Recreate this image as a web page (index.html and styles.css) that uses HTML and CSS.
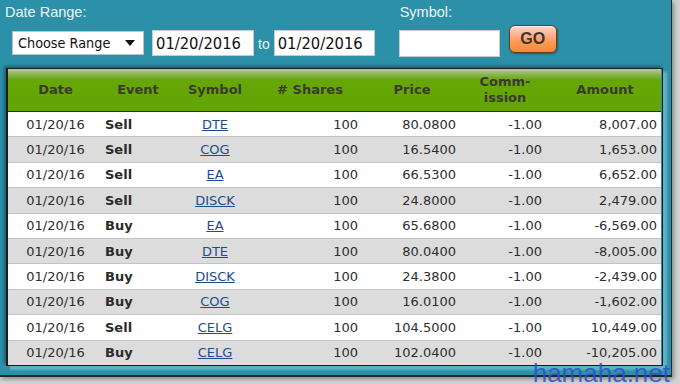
FILE: index.html
```html
<!DOCTYPE html>
<html>
<head>
<meta charset="utf-8">
<link rel="stylesheet" href="styles.css">
</head>
<body>
<div class="frame">
  <div class="toolbar">
    <div class="group group-date">
      <div class="label">Date Range:</div>
      <div class="controls">
        <div class="select"><span>Choose Range</span><svg class="caret" width="10" height="6" viewBox="0 0 10 6"><path d="M0 0H10L5 6Z" fill="#111"/></svg></div>
        <input class="date-input first" type="text" value="01/20/2016">
        <span class="to">to</span>
        <input class="date-input second" type="text" value="01/20/2016">
      </div>
    </div>
    <div class="group group-symbol">
      <div class="label label-symbol">Symbol:</div>
      <div class="controls">
        <input class="sym-input" type="text" value="">
        <button class="go">GO</button>
      </div>
    </div>
  </div>
  <div class="grid-wrap">
    <table class="grid">
      <colgroup>
        <col class="c-date"><col class="c-event"><col class="c-symbol"><col class="c-shares"><col class="c-price"><col class="c-comm"><col class="c-amount">
      </colgroup>
      <thead>
        <tr>
          <th>Date</th><th>Event</th><th>Symbol</th><th># Shares</th><th>Price</th><th>Comm-<br>ission</th><th>Amount</th>
        </tr>
      </thead>
      <tbody>
        <tr><td class="d">01/20/16</td><td class="ev">Sell</td><td class="sym"><a href="#">DTE</a></td><td class="sh">100</td><td class="pr">80.0800</td><td class="cm">-1.00</td><td class="am">8,007.00</td></tr>
        <tr class="alt"><td class="d">01/20/16</td><td class="ev">Sell</td><td class="sym"><a href="#">COG</a></td><td class="sh">100</td><td class="pr">16.5400</td><td class="cm">-1.00</td><td class="am">1,653.00</td></tr>
        <tr><td class="d">01/20/16</td><td class="ev">Sell</td><td class="sym"><a href="#">EA</a></td><td class="sh">100</td><td class="pr">66.5300</td><td class="cm">-1.00</td><td class="am">6,652.00</td></tr>
        <tr class="alt"><td class="d">01/20/16</td><td class="ev">Sell</td><td class="sym"><a href="#">DISCK</a></td><td class="sh">100</td><td class="pr">24.8000</td><td class="cm">-1.00</td><td class="am">2,479.00</td></tr>
        <tr><td class="d">01/20/16</td><td class="ev">Buy</td><td class="sym"><a href="#">EA</a></td><td class="sh">100</td><td class="pr">65.6800</td><td class="cm">-1.00</td><td class="am">-6,569.00</td></tr>
        <tr class="alt"><td class="d">01/20/16</td><td class="ev">Buy</td><td class="sym"><a href="#">DTE</a></td><td class="sh">100</td><td class="pr">80.0400</td><td class="cm">-1.00</td><td class="am">-8,005.00</td></tr>
        <tr><td class="d">01/20/16</td><td class="ev">Buy</td><td class="sym"><a href="#">DISCK</a></td><td class="sh">100</td><td class="pr">24.3800</td><td class="cm">-1.00</td><td class="am">-2,439.00</td></tr>
        <tr class="alt"><td class="d">01/20/16</td><td class="ev">Buy</td><td class="sym"><a href="#">COG</a></td><td class="sh">100</td><td class="pr">16.0100</td><td class="cm">-1.00</td><td class="am">-1,602.00</td></tr>
        <tr><td class="d">01/20/16</td><td class="ev">Sell</td><td class="sym"><a href="#">CELG</a></td><td class="sh">100</td><td class="pr">104.5000</td><td class="cm">-1.00</td><td class="am">10,449.00</td></tr>
        <tr class="alt"><td class="d">01/20/16</td><td class="ev">Buy</td><td class="sym"><a href="#">CELG</a></td><td class="sh">100</td><td class="pr">102.0400</td><td class="cm">-1.00</td><td class="am">-10,205.00</td></tr>
      </tbody>
    </table>
  </div>
</div>
<div class="watermark">hamaha.net</div>
</body>
</html>
```
FILE: styles.css
```css
html, body {
  margin: 0;
  padding: 0;
}
body {
  background: #d2d2d2;
  font-family: "DejaVu Sans", sans-serif;
  width: 680px;
  height: 384px;
  overflow: hidden;
  position: relative;
}
.frame {
  width: 671px;
  height: 375px;
  background: #2b90a8;
  border-right: 1px solid #1b2a30;
  border-bottom: 2px solid #1b2a30;
  box-shadow: 2px 2px 4px rgba(0,0,0,0.35);
  overflow: hidden;
}
.toolbar {
  display: flex;
  padding-top: 4px;
  height: 52px;
}
.group-date {
  margin-left: 5px;
}
.group-symbol {
  margin-left: 24px;
}
.label {
  font-family: "Liberation Sans", Arial, sans-serif;
  font-size: 14.5px;
  line-height: 16px;
  color: #eef4f6;
  height: 16px;
}
.label-symbol {
  margin-left: 1px;
}
.controls {
  display: flex;
  align-items: center;
  margin-top: 10px;
  height: 26px;
}
.group-date .controls {
  margin-left: 7px;
}
.select {
  box-sizing: border-box;
  width: 132px;
  height: 24px;
  border: 1px solid #b9c4c8;
  background: #fff;
  display: flex;
  align-items: center;
  justify-content: space-between;
  padding: 0 8px 0 5px;
  font-family: "DejaVu Sans Condensed", "DejaVu Sans", sans-serif;
  font-size: 14.3px;
  color: #111;
}
.caret {
  display: block;
}
.date-input, .sym-input {
  box-sizing: border-box;
  height: 26px;
  border: 1px solid #c4ccd0;
  background: #fff;
  padding: 0 0 0 3px;
  margin: 0;
  font-family: "DejaVu Sans Condensed", "DejaVu Sans", sans-serif;
  font-size: 16.4px;
  color: #111;
  outline: none;
}
.date-input.first {
  width: 102px;
  margin-left: 8px;
}
.date-input.second {
  width: 101px;
}
.to {
  font-family: "Liberation Sans", Arial, sans-serif;
  font-size: 14px;
  color: #eef4f6;
  margin: 0 4px 0 4px;
  padding-top: 2px;
}
.sym-input {
  width: 101px;
  height: 27px;
}
.go {
  box-sizing: border-box;
  align-self: flex-start;
  margin: -5px 0 0 9px;
  width: 48px;
  height: 28px;
  border: 1px solid #6b3a18;
  border-radius: 6px;
  background: linear-gradient(to bottom, #ffd6c4 0%, #ffb090 35%, #ff9a55 60%, #f58a3a 100%);
  box-shadow: inset 0 1px 0 rgba(255,255,255,0.6), 1px 1px 2px rgba(0,0,0,0.35);
  font-family: "Liberation Sans", Arial, sans-serif;
  font-weight: bold;
  font-size: 16px;
  color: #3a3530;
  padding: 0;
  line-height: 26px;
}
.grid-wrap {
  margin: 12px 0 0 6px;
  width: 654px;
  border: 1px solid #1c1c1c;
  border-left-width: 2px;
  box-shadow: -2px -2px 3px rgba(0,0,0,0.35), 4px 4px 2px rgba(140,210,228,0.55);
}
.grid {
  width: 653px;
  border-collapse: collapse;
  table-layout: fixed;
  font-size: 13px;
  color: #2e2e2e;
}
.c-date { width: 95px; }
.c-event { width: 70px; }
.c-symbol { width: 84px; }
.c-shares { width: 106px; }
.c-price { width: 98px; }
.c-comm { width: 88px; }
.c-amount { width: 112px; }
.grid thead tr {
  background: linear-gradient(to bottom, #b6c8a4 0px, #8fb65a 5px, #66a708 11px, #62a500 100%);
}
.grid th {
  height: 42px;
  padding: 0;
  font-weight: bold;
  font-size: 13px;
  line-height: 16px;
  color: #3a3a2a;
  text-align: center;
  border-bottom: 1px solid #2a2a2a;
}
.grid td {
  height: 24.4px;
  padding: 0;
  border-bottom: 1px solid #c4c4c4;
  white-space: nowrap;
  background: #fff;
}
.grid tr.alt td {
  background: #dcdcdc;
}
.grid tbody tr:last-child td {
  border-bottom: none;
}
.grid td.d { text-align: center; }
.grid td.ev { font-weight: bold; padding-left: 2px; color: #2a2a2a; }
.grid td.sym { text-align: center; }
.grid td.sym a { color: #1d4c8c; text-decoration: underline; }
.grid td.sh { text-align: right; padding-right: 5px; }
.grid td.pr { text-align: right; padding-right: 5px; }
.grid td.cm { text-align: right; padding-right: 7px; }
.grid td.am { text-align: right; padding-right: 4px; }
.watermark {
  position: absolute;
  right: 10px;
  top: 360px;
  font-family: "Liberation Sans", Arial, sans-serif;
  font-size: 26px;
  line-height: 26px;
  color: rgba(48, 78, 200, 0.85);
}
```
